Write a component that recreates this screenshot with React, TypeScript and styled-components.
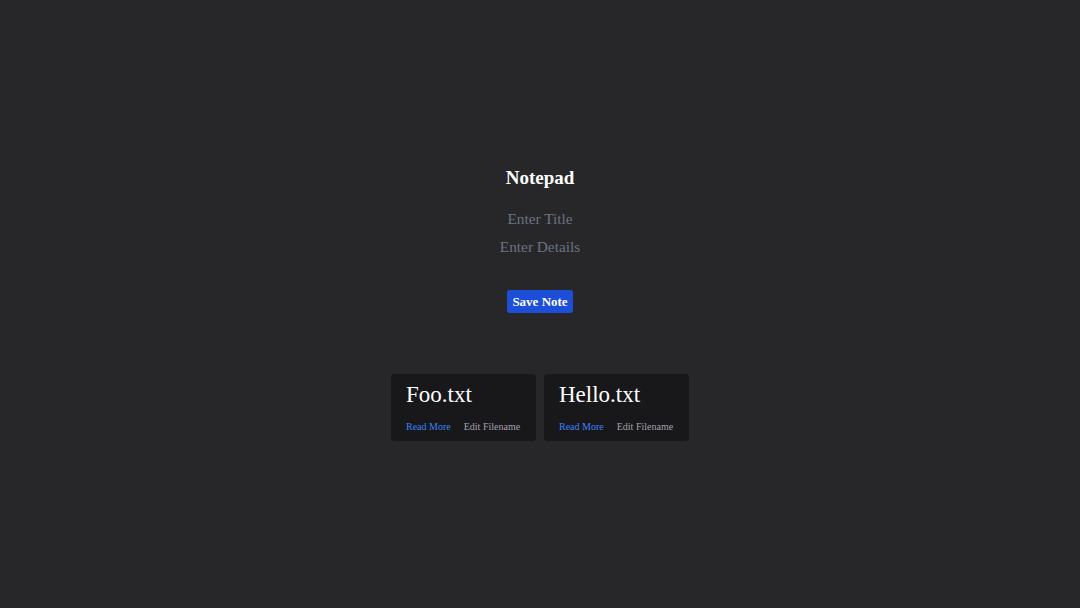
import { useState } from 'react';
import styled, { createGlobalStyle } from 'styled-components';

const GlobalStyle = createGlobalStyle`
  html, body {
    margin: 0;
    padding: 0;
    background-color: #27272a;
    font-family: "Liberation Serif", "Times New Roman", serif;
    color: #ffffff;
  }
`;

const Page = styled.div`
  min-height: 100vh;
  box-sizing: border-box;
  padding-bottom: 1px;
  display: flex;
  flex-direction: column;
  align-items: center;
  justify-content: center;
`;

const Title = styled.h1`
  font-size: 19px;
  font-weight: bold;
  margin: 0 0 15px 0;
  line-height: 24px;
`;

const Form = styled.form`
  display: flex;
  flex-direction: column;
  align-items: center;
`;

const Input = styled.input`
  background: transparent;
  border: none;
  outline: none;
  color: #ffffff;
  text-align: center;
  font-family: inherit;
  font-size: 15.3px;
  line-height: 20px;
  padding: 4px 0;
  width: 200px;
  &::placeholder {
    color: #6b7280;
  }
`;

const SaveButton = styled.button`
  margin-top: 29px;
  background-color: #1d4ed8;
  color: #ffffff;
  border: none;
  border-radius: 3px;
  font-family: inherit;
  font-weight: bold;
  font-size: 13px;
  height: 23px;
  padding: 0 5px;
  cursor: pointer;
`;

const NoteList = styled.div`
  margin-top: 61px;
  display: flex;
  gap: 8px;
`;

const NoteCard = styled.div`
  width: 145px;
  height: 67px;
  box-sizing: border-box;
  background-color: #18181b;
  border-radius: 4px;
  padding: 7px 15px 0 15px;
  display: flex;
  flex-direction: column;
`;

const NoteName = styled.div`
  font-size: 23px;
  line-height: 28px;
  white-space: nowrap;
`;

const Actions = styled.div`
  display: flex;
  gap: 13px;
  margin-top: 12px;
  font-size: 10px;
  white-space: nowrap;
`;

const ActionLink = styled.span<{ primary?: boolean }>`
  color: ${({ primary }) => (primary ? '#3b82f6' : '#a1a1aa')};
  cursor: pointer;
`;

const notes = ['Foo.txt', 'Hello.txt'];

export default function App() {
  const [title, setTitle] = useState('');
  const [details, setDetails] = useState('');

  return (
    <>
      <GlobalStyle />
      <Page>
        <Title>Notepad</Title>
        <Form onSubmit={(e) => e.preventDefault()}>
          <Input placeholder="Enter Title" value={title} onChange={(e) => setTitle(e.target.value)} />
          <Input placeholder="Enter Details" value={details} onChange={(e) => setDetails(e.target.value)} />
          <SaveButton type="submit">Save Note</SaveButton>
        </Form>
        <NoteList>
          {notes.map((name) => (
            <NoteCard key={name}>
              <NoteName>{name}</NoteName>
              <Actions>
                <ActionLink primary>Read More</ActionLink>
                <ActionLink>Edit Filename</ActionLink>
              </Actions>
            </NoteCard>
          ))}
        </NoteList>
      </Page>
    </>
  );
}
